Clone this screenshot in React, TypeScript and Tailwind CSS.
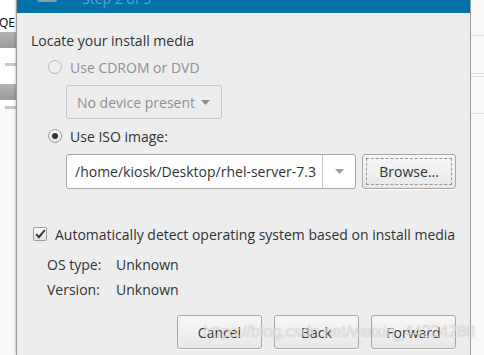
import React from 'react';

const FONT = "font-['Open_Sans','DejaVu_Sans',sans-serif]";

const Radio: React.FC<{ checked?: boolean; disabled?: boolean; label: string }> = ({ checked, disabled, label }) => (
    <div className="flex items-center h-[20px]">
        <span
            className={`w-[14px] h-[14px] rounded-full border flex items-center justify-center ${disabled ? 'border-[#b9b9b9] bg-[#efefef]' : 'border-[#9d9d9d] bg-gradient-to-b from-[#fafafa] to-[#e4e4e4]'}`}
        >
            {checked && <span className="w-[6px] h-[6px] rounded-full bg-[#2e3436]" />}
        </span>
        <span className={`ml-[8px] ${disabled ? 'text-[#8d9091]' : 'text-[#2e3436]'}`}>{label}</span>
    </div>
);

const Button: React.FC<{ label: string; className?: string; focus?: boolean }> = ({ label, className, focus }) => (
    <div
        className={`h-[34px] rounded-[3px] border border-[#a7a7a7] bg-gradient-to-b from-[#f7f7f7] to-[#e8e8e8] shadow-[0_1px_0_rgba(255,255,255,0.8)] flex items-center justify-center p-[3px] ${className ?? ''}`}
    >
        <div className={`w-full h-full flex items-center justify-center ${focus ? 'border border-dashed border-[#9a9a9a]' : ''}`}>
            {label}
        </div>
    </div>
);

const Caret: React.FC<{ color?: string }> = ({ color = '#2e3436' }) => (
    <svg width="9" height="5" viewBox="0 0 9 5">
        <path d="M0 0 H9 L4.5 5 Z" fill={color} />
    </svg>
);

export default function App() {
    return (
        <div className={`w-[484px] h-[355px] overflow-hidden flex bg-white text-[14px] leading-[17px] text-[#2e3436] ${FONT} relative`}>
            {/* window behind, left side */}
            <div className="w-[16px] shrink-0 flex flex-col bg-white">
                <div className="h-[14px]" />
                <div className="h-[18px] text-[12px] leading-[18px] text-black -ml-[1px]">QE</div>
                <div className="h-[16px] bg-gradient-to-b from-[#b4b4b4] to-[#9a9a9a]" />
                <div className="h-[15px]" />
                <div className="h-[3px] ml-[5px] bg-[#c8c8c8]" />
                <div className="h-[18px]" />
                <div className="h-[16px] bg-gradient-to-b from-[#b4b4b4] to-[#9a9a9a]" />
                <div className="h-[6px]" />
                <div className="h-[3px] ml-[5px] bg-[#c8c8c8]" />
                <div className="flex-1 bg-[#f9f9f9]" />
            </div>

            {/* dialog */}
            <div className="w-[455px] shrink-0 flex flex-col border-l border-r border-[#9c9c9c] shadow-[0_0_3px_rgba(0,0,0,0.35)] bg-[#ededed]">
                <div className="h-[13px] bg-[#0071a9] relative overflow-hidden">
                    <div className="absolute left-[20px] -top-[10px] w-[20px] h-[12px] rounded-[2px] bg-[#8a9aa6]" />
                    <div className="absolute left-[65px] -top-[9px] text-[14px] leading-[16px] text-[#5fa6cf]">Step 2 of 5</div>
                </div>

                <div className="flex flex-col pl-[14px] pr-[14px]">
                    <div className="mt-[19px]">Locate your install media</div>

                    <div className="ml-[17px] mt-[8px]">
                        <Radio disabled label="Use CDROM or DVD" />
                    </div>
                    <div className="ml-[35px] mt-[8px] w-[156px] h-[34px] rounded-[3px] border border-[#c6c6c6] bg-[#ededed] flex items-center px-[10px] text-[#8d9091]">
                        <span>No device present</span>
                        <span className="ml-[6px] mt-[1px]">
                            <Caret color="#8d9091" />
                        </span>
                    </div>

                    <div className="ml-[17px] mt-[7px]">
                        <Radio checked label="Use ISO image:" />
                    </div>
                    <div className="ml-[35px] mt-[8px] flex items-center gap-[6px]">
                        <div className="w-[291px] h-[35px] rounded-[3px] border border-[#a7a7a7] bg-white flex items-stretch">
                            <div className="flex-1 flex items-center pl-[8px] text-[#2e3436] overflow-hidden whitespace-nowrap">/home/kiosk/Desktop/rhel-server-7.3</div>
                            <div className="w-[33px] shrink-0 border-l border-[#c4c4c4] flex items-center justify-center">
                                <Caret color="#9a9a9a" />
                            </div>
                        </div>
                        <Button label="Browse..." focus className="w-[94px] h-[35px]" />
                    </div>

                    <div className="mt-[35px] ml-[2px] flex items-center h-[20px]">
                        <span className="w-[14px] h-[14px] shrink-0 rounded-[2px] border border-[#9d9d9d] bg-gradient-to-b from-[#fafafa] to-[#e4e4e4] flex items-center justify-center">
                            <svg width="11" height="10" viewBox="0 0 11 10">
                                <path d="M1.2 5.2 L4 8.2 L9.8 1" fill="none" stroke="#2e3436" strokeWidth="1.9" />
                            </svg>
                        </span>
                        <span className="ml-[8px] whitespace-nowrap">Automatically detect operating system based on install media</span>
                    </div>

                    <div className="mt-[10px] ml-[16px] flex h-[20px] items-center">
                        <span className="w-[69px]">OS type:</span>
                        <span>Unknown</span>
                    </div>
                    <div className="mt-[5px] ml-[16px] flex h-[20px] items-center">
                        <span className="w-[69px]">Version:</span>
                        <span>Unknown</span>
                    </div>

                    <div className="mt-[16px] flex justify-end gap-[12px]">
                        <Button label="Cancel" className="w-[85px]" />
                        <Button label="Back" className="w-[85px]" />
                        <Button label="Forward" className="w-[85px]" />
                    </div>
                </div>
            </div>

            {/* window behind, right side */}
            <div className="flex-1 flex flex-col bg-[#f8f8f8]">
                <div className="h-[35px]" />
                <div className="h-[1px] bg-[#dcdcdc]" />
                <div className="h-[37px]" />
                <div className="h-[1px] bg-[#dcdcdc]" />
                <div className="h-[2px]" />
                <div className="h-[1px] bg-[#dcdcdc]" />
                <div className="h-[36px]" />
                <div className="h-[1px] bg-[#dcdcdc]" />
            </div>

            {/* watermark */}
            <div className="absolute left-[203px] top-[322px] text-[16px] leading-[20px] text-white/60 font-['Liberation_Sans',sans-serif] [text-shadow:0_0_1px_rgba(110,110,110,0.5)] pointer-events-none whitespace-nowrap">
                https://blog.csdn.net/weixin_44224288
            </div>
        </div>
    );
}
